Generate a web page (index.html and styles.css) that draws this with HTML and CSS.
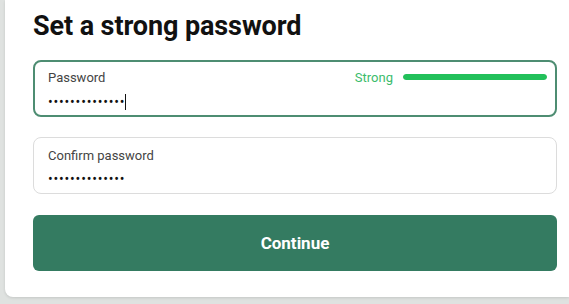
FILE: index.html
```html
<!DOCTYPE html>
<html lang="en">
<head>
    <meta charset="UTF-8">
    <meta name="viewport" content="width=device-width, initial-scale=1.0">
    <title>Set a strong password</title>
    <link rel="stylesheet" href="styles.css">
</head>
<body>

<div class="card">
    <h2>Set a strong password</h2>

    <div class="field active">
        <div class="field-top">
            <span class="label">Password</span>
            <span class="strength">
                <span class="strength-text">Strong</span>
                <span class="strength-bar"><span class="strength-fill" style="width: 100%"></span></span>
            </span>
        </div>
        <div class="value">••••••••••••••<span class="caret"></span></div>
    </div>

    <div class="field">
        <div class="field-top">
            <span class="label">Confirm password</span>
        </div>
        <div class="value">••••••••••••••</div>
    </div>

    <button class="continue-btn">Continue</button>
</div>

</body>
</html>
```

FILE: styles.css
```css
html, body {
    margin: 0;
    padding: 0;
}
body {
    font-family: Roboto, "Liberation Sans", sans-serif;
    background-color: #dfe2e0;
    height: 304px;
    overflow: hidden;
}
.card {
    background-color: #fff;
    margin-left: 5px;
    height: 297px;
    box-sizing: border-box;
    padding: 9px 12px 0 28px;
    border-bottom-left-radius: 8px;
    box-shadow: 0 1px 3px rgba(0, 0, 0, 0.12);
}
h2 {
    margin: 0 0 17px 0;
    font-size: 27px;
    line-height: 34px;
    font-weight: 700;
    color: #111;
    letter-spacing: -0.1px;
}
.field {
    box-sizing: border-box;
    height: 57px;
    border: 1px solid #dcdcdc;
    border-radius: 8px;
    padding: 9px 13px 0 14px;
    margin-bottom: 20px;
}
.field.active {
    border: 2px solid #4e8d72;
    padding: 7px 8px 0 13px;
}
.field-top {
    display: flex;
    align-items: center;
    justify-content: space-between;
    height: 16px;
}
.label {
    font-size: 13px;
    color: #444;
}
.strength {
    display: flex;
    align-items: center;
    gap: 10px;
}
.strength-text {
    font-size: 13px;
    color: #3cbc6c;
}
.strength-bar {
    width: 144px;
    height: 6px;
    border-radius: 3px;
    background-color: #e6e6e6;
    overflow: hidden;
}
.strength-fill {
    display: block;
    height: 100%;
    background-color: #22c05a;
    border-radius: 3px;
}
.value {
    margin-top: 8px;
    font-size: 14px;
    line-height: 16px;
    color: #111;
    letter-spacing: 0.8px;
    display: flex;
    align-items: center;
}
.active .value {
    margin-top: 9px;
}
.caret {
    display: inline-block;
    width: 1px;
    height: 16px;
    background-color: #111;
}
.continue-btn {
    display: block;
    width: 100%;
    height: 56px;
    margin-top: 21px;
    border: none;
    border-radius: 6px;
    background-color: #347b61;
    color: #fff;
    font-family: Roboto, "Liberation Sans", sans-serif;
    font-size: 17px;
    font-weight: 700;
    cursor: pointer;
}
```
